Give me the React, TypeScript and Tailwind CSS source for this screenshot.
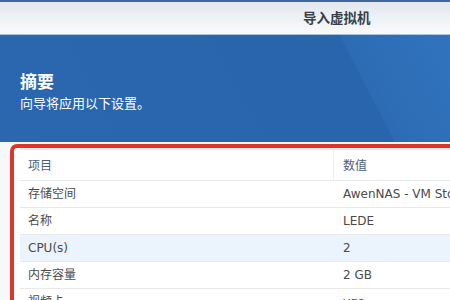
import React from "react";

const font = { fontFamily: '"DejaVu Sans", "Noto Sans CJK SC", sans-serif' };
const cjk = { fontFamily: '"Noto Sans CJK SC", "DejaVu Sans", sans-serif' };

const rows: { k: string; v: string; hl?: boolean }[] = [
  { k: "存储空间", v: "AwenNAS - VM Storage 1" },
  { k: "名称", v: "LEDE" },
  { k: "CPU(s)", v: "2", hl: true },
  { k: "内存容量", v: "2 GB" },
  { k: "视频卡", v: "vga" },
];

export default function App() {
  return (
    <div className="w-[450px] h-[300px] overflow-hidden bg-white flex flex-col" style={font}>
      <div className="h-[2px] shrink-0 bg-[#42679a]" />
      <div className="h-[32px] shrink-0 flex items-center pl-[303px] bg-[linear-gradient(180deg,#e2e7ee_0%,#eef1f5_50%,#f8f9fb_100%)]">
        <span className="text-[13.5px] font-bold text-[#3a3f47] leading-none" style={cjk}>
          导入虚拟机
        </span>
      </div>
      <div className="h-px shrink-0 bg-[#a9c3e3]" />
      <div className="h-[107px] shrink-0 flex flex-col pl-[20px] pt-[33px] text-white bg-[linear-gradient(62.8deg,#2a67af_0%,#2965ac_78%,#2d6cb5_78.4%,#3073bd_100%)]">
        <div className="text-[17px] font-bold leading-[25px]" style={cjk}>
          摘要
        </div>
        <div className="text-[13px] leading-[19px]" style={cjk}>
          向导将应用以下设置。
        </div>
      </div>
      <div className="h-[2px] shrink-0 bg-[#f1f4f8]" />
      <div className="flex-1 bg-[#f6f8fa] pl-[10px]">
        <div className="w-[460px] h-full border-l-4 border-t-4 border-[#d9372b] rounded-tl-[7px] bg-white pl-[6px]">
          <div className="border-t-2 border-[#e4eaf2]">
            <div className="flex h-[31px] border-b border-[#e6e9ee] text-[12px] text-[#4d5e7a]">
              <div className="w-[314px] shrink-0 flex items-center pl-[8px] border-r border-[#eceff3]" style={cjk}>
                项目
              </div>
              <div className="flex-1 min-w-0 flex items-center pl-[9px]" style={cjk}>
                数值
              </div>
            </div>
            {rows.map((r) => (
              <div
                key={r.k}
                className={`flex h-[27px] border-b border-[#e8e8e8] text-[12px] text-[#4a4a4a] ${r.hl ? "bg-[#ebf3fd]" : "bg-white"}`}
              >
                <div className="w-[314px] shrink-0 flex items-center pl-[8px]">{r.k}</div>
                <div className="flex-1 min-w-0 flex items-center pl-[9px] whitespace-nowrap overflow-hidden">{r.v}</div>
              </div>
            ))}
          </div>
        </div>
      </div>
    </div>
  );
}
